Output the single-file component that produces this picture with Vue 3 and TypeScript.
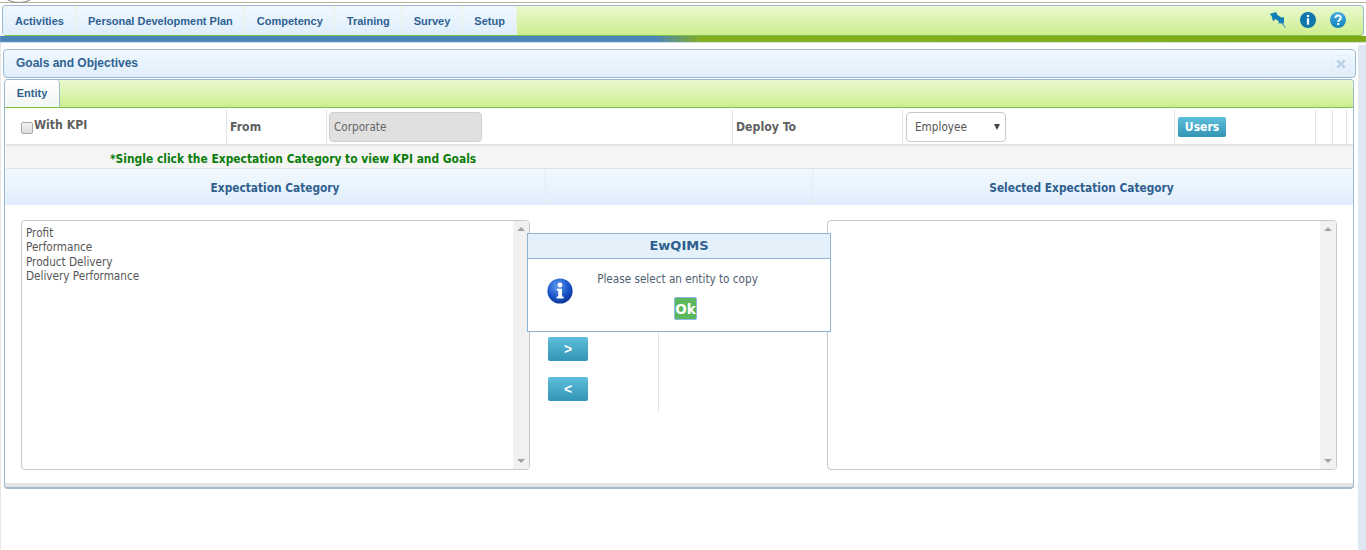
<script setup lang="ts">
const tabs: string[] = ['Activities', 'Personal Development Plan', 'Competency', 'Training', 'Survey', 'Setup']
const items: string[] = ['Profit', 'Performance', 'Product Delivery', 'Delivery Performance']
</script>

<template>
  <div class="page">
    <div class="strip"><span class="logo"></span></div>
    <nav class="nav">
      <div class="tabs">
        <a v-for="t in tabs" :key="t" class="tab">{{ t }}</a>
      </div>
      <div class="tools">
        <svg width="17" height="16" viewBox="0 0 17 16">
          <path d="M0.8 2 L7 0 L8.5 3 L12.8 5.8 L15 5 L15 11.6 L9.2 11.2 L10 9.6 L6.6 7 L4 9.2 L2.6 4 Z" fill="#0f7fb5" />
          <path d="M11.5 9.5 L16.5 15.5" stroke="#3f8fb8" stroke-width="1.1" fill="none" />
        </svg>
        <svg width="16" height="16" viewBox="0 0 16 16">
          <circle cx="8" cy="8" r="8" fill="#0f76ac" />
          <circle cx="8" cy="4" r="1.3" fill="#fff" />
          <rect x="6.9" y="6.3" width="2.2" height="6.4" fill="#fff" />
        </svg>
        <svg width="16" height="16" viewBox="0 0 16 16">
          <defs>
            <linearGradient id="qg" x1="0" y1="0" x2="0" y2="1">
              <stop offset="0" stop-color="#45aee0" />
              <stop offset="1" stop-color="#1380bd" />
            </linearGradient>
          </defs>
          <circle cx="8" cy="8" r="8" fill="url(#qg)" />
          <path d="M5.4 6 C5.5 2.7 10.8 2.6 10.8 5.8 C10.8 7.8 8.3 7.8 8.3 10" fill="none" stroke="#fff" stroke-width="1.9" />
          <rect x="7.2" y="11" width="2.1" height="2.1" fill="#fff" />
        </svg>
      </div>
    </nav>
    <div class="rule"></div>

    <div class="body">
      <main class="panel">
        <header class="head">
          <span class="headText">Goals and Objectives</span>
          <span class="close">
            <svg width="10" height="10" viewBox="0 0 10 10">
              <path d="M1.2 1.2 L8.8 8.8 M8.8 1.2 L1.2 8.8" stroke="#bcd3e8" stroke-width="2.8" fill="none" />
            </svg>
          </span>
        </header>
        <div class="card">
          <div class="tabbar"><span class="active">Entity</span></div>
          <div class="row">
            <div class="cell c1"><input type="checkbox" class="check" /><b class="kpi">With KPI</b></div>
            <div class="cell c2"><b>From</b></div>
            <div class="cell c3"><div class="readonly">Corporate</div></div>
            <div class="cell c4"><b>Deploy To</b></div>
            <div class="cell c5"><div class="select"><span>Employee</span><i></i></div></div>
            <div class="cell c6"><button class="users">Users</button></div>
            <div class="cell c7"></div>
            <div class="cell c8"></div>
          </div>
          <div class="note">*Single click the Expectation Category to view KPI and Goals</div>
          <div class="cols">
            <div class="colA">Expectation Category</div>
            <div class="colB"></div>
            <div class="colC">Selected Expectation Category</div>
          </div>
          <div class="lists">
            <div class="list left">
              <div class="opts"><div v-for="i in items" :key="i">{{ i }}</div></div>
              <div class="bar"><i class="up"></i><i class="down"></i></div>
            </div>
            <div class="mid">
              <div class="moves">
                <button class="move">&gt;</button>
                <button class="move">&lt;</button>
              </div>
              <div class="divider"></div>
            </div>
            <div class="list right">
              <div class="opts"></div>
              <div class="bar"><i class="up"></i><i class="down"></i></div>
            </div>
          </div>
        </div>
      </main>
      <div class="scroll"></div>
    </div>

    <div class="dialog">
      <div class="dtitle">EwQIMS</div>
      <div class="dbody">
        <svg class="dicon" width="26" height="26" viewBox="0 0 26 26">
          <defs>
            <radialGradient id="ig" cx="0.4" cy="0.3" r="0.8">
              <stop offset="0" stop-color="#5f9cf0" />
              <stop offset="0.6" stop-color="#1650c4" />
              <stop offset="1" stop-color="#0a2a80" />
            </radialGradient>
          </defs>
          <circle cx="13" cy="13" r="12.6" fill="url(#ig)" />
          <circle cx="13" cy="7" r="2.4" fill="#fff" />
          <path d="M9.8 10.8 H15 V18.6 H16.6 V20.6 H9.6 V18.6 H11.2 V12.8 H9.8 Z" fill="#fff" />
        </svg>
        <div class="dmain">
          <div class="dmsg">Please select an entity to copy</div>
          <button class="ok">Ok</button>
        </div>
      </div>
    </div>
  </div>
</template>

<style>
html, body { margin: 0; padding: 0; background: #fff; overflow: hidden; }
</style>

<style scoped>
.page {
  position: relative;
  width: 1366px;
  height: 550px;
  overflow: hidden;
  background: #fff;
  font-family: "DejaVu Sans", Tahoma, sans-serif;
  font-stretch: condensed;
  font-size: 11.65px;
  color: #5a5a5a;
}
.strip {
  position: relative;
  height: 5px;
  box-sizing: border-box;
  background: linear-gradient(#fff 0 2px, #b4b699 2px 3px, #fff 3px);
}
.logo {
  position: absolute;
  left: 4px;
  top: -13px;
  width: 28px;
  height: 14px;
  border-radius: 50%;
  background: #fff;
  border: 1px solid #8b8b8b;
}
.nav {
  display: flex;
  justify-content: space-between;
  align-items: center;
  box-sizing: border-box;
  height: 31px;
  margin: 0 2px;
  border: 1px solid #9db9d2;
  border-bottom-color: #7cc24a;
  border-radius: 4px;
  background: linear-gradient(#eaf9cf, #cdee90);
}
.tabs { display: flex; height: 29px; }
.tab {
  display: flex;
  align-items: center;
  padding: 0 12px;
  border-radius: 4px 4px 0 0;
  background: linear-gradient(#f0f8fe, #dfeefb);
  box-shadow: inset -1px 0 0 #eef2e6;
  font-family: "Liberation Sans", Arial, sans-serif;
  font-size: 11px;
  font-weight: 700;
  color: #2e6192;
}
.tools { display: flex; align-items: center; gap: 14px; padding: 0 17px 1px 0; }
.rule {
  height: 7px;
  background: linear-gradient(90deg, #4a84b8 0, #4a84b8 48%, #85ae1c 51.5%, #7fa914 100%);
  box-shadow: inset 0 -1px 1px #d7e6ee;
}
.body { display: flex; height: 507px; }
.panel { flex: 1; min-width: 0; padding: 6px 0 0 2px; border-left: 1px solid #e6e6e6; }
.scroll { width: 8px; margin-top: 2px; background: #dfe8f1; }
.head {
  display: flex;
  justify-content: space-between;
  align-items: center;
  box-sizing: border-box;
  height: 29px;
  margin-right: 2px;
  padding: 0 5px 0 12px;
  border: 1px solid #9db9d2;
  border-radius: 4px;
  background: linear-gradient(#f2f9fe, #dfeefb);
  font-family: "Liberation Sans", Arial, sans-serif;
  font-size: 12px;
  font-weight: 700;
  color: #2e6192;
}
.headText { position: relative; top: -1px; }
.close {
  display: flex;
  align-items: center;
  justify-content: center;
  box-sizing: border-box;
  width: 18px;
  height: 18px;
  border: 1px solid #e3edf6;
  border-radius: 3px;
}
.card {
  box-sizing: border-box;
  height: 410px;
  margin: 1px 4px 0 1px;
  border: 1px solid #9db9d2;
  border-radius: 4px;
  border-bottom-width: 2px;
  box-shadow: inset 0 -4px 0 #e3e3e3;
  overflow: hidden;
}
.tabbar {
  height: 28px;
  box-sizing: border-box;
  border-bottom: 1px solid #80c04a;
  background: linear-gradient(#eaf9cf, #cdee90);
}
.active {
  display: inline-flex;
  align-items: center;
  justify-content: center;
  box-sizing: border-box;
  width: 55px;
  height: 27px;
  padding-bottom: 1px;
  border-right: 1px solid #9db9d2;
  background: linear-gradient(#fff, #f1f6f1);
  border-radius: 4px 4px 0 0;
  font-family: "Liberation Sans", Arial, sans-serif;
  font-size: 11px;
  font-weight: 700;
  color: #2e6192;
}
.row {
  display: flex;
  height: 38px;
  margin-left: 1px;
  padding-top: 2px;
  box-sizing: border-box;
  border-bottom: 2px solid #e3e3e3;
}
.cell {
  display: flex;
  align-items: center;
  box-sizing: border-box;
  border-right: 1px solid #e3e3e3;
}
.cell b { font-size: 12.2px; color: #5f5f5f; }
.c1 { width: 221px; padding-left: 15px; }
.kpi { position: relative; top: -2px; }
.c2 { width: 100px; padding-left: 3px; }
.c3 { width: 406px; padding-left: 2px; }
.c4 { width: 170px; padding-left: 3px; }
.c5 { width: 272px; padding-left: 3px; }
.c6 { width: 141px; padding-left: 3px; }
.c7 { width: 17px; }
.c8 { width: 14px; }
.check {
  appearance: none;
  position: relative;
  top: 1px;
  width: 12px;
  height: 12px;
  margin: 0 1px 0 0;
  border: 1px solid #a8a8a8;
  border-radius: 2px;
  background: linear-gradient(#f2f2f2, #dcdcdc);
}
.readonly {
  box-sizing: border-box;
  width: 153px;
  height: 30px;
  line-height: 29px;
  padding-left: 4px;
  border: 1px solid #cfcfcf;
  border-radius: 4px;
  background: #e0e0e0;
  color: #666;
}
.select {
  display: flex;
  align-items: center;
  justify-content: space-between;
  box-sizing: border-box;
  width: 100px;
  height: 30px;
  padding: 0 5px 0 8px;
  border: 1px solid #c8c8c8;
  border-radius: 4px;
  background: #fff;
  color: #555;
}
.select i {
  border-left: 3px solid transparent;
  border-right: 3px solid transparent;
  border-top: 6px solid #444;
}
.users {
  width: 48px;
  height: 20px;
  padding: 0;
  border: 0;
  border-radius: 2px;
  background: linear-gradient(#5ebfdc, #3294b4);
  font-family: inherit;
  font-stretch: condensed;
  font-size: 12px;
  font-weight: 700;
  color: #fff;
}
.note {
  box-sizing: border-box;
  height: 23px;
  line-height: 23px;
  margin-left: 1px;
  padding: 2px 0 0 104px;
  overflow: hidden;
  background: #f5f5f5;
  border-bottom: 1px solid #dfe3e6;
  font-size: 11.9px;
  font-weight: 700;
  color: #0a7d0a;
}
.cols {
  display: flex;
  height: 36px;
  background: linear-gradient(#f2f9fe, #dfeefb);
  font-size: 11.8px;
  font-weight: 700;
  color: #2f5f8f;
}
.colA, .colC { display: flex; align-items: center; justify-content: center; padding-top: 1px; box-sizing: border-box; }
.colA { width: 541px; border-right: 1px solid #e2ecf5; }
.colB { width: 267px; border-right: 1px solid #e2ecf5; box-sizing: border-box; }
.colC { flex: 1; padding-right: 3px; }
.lists { display: flex; padding: 15px 16px 0 16px; }
.list {
  display: flex;
  box-sizing: border-box;
  height: 250px;
  border: 1px solid #c8c8c8;
  border-radius: 4px;
  overflow: hidden;
}
.left { width: 509px; }
.right { width: 510px; }
.opts { flex: 1; padding: 5px 4px; line-height: 14.3px; color: #555; }
.bar {
  position: relative;
  width: 16px;
  background: #f1f1f1;
}
.up, .down {
  position: absolute;
  left: 4px;
  border-left: 4px solid transparent;
  border-right: 4px solid transparent;
}
.up { top: 6px; border-bottom: 4px solid #a3a3a3; }
.down { bottom: 6px; border-top: 4px solid #a3a3a3; }
.mid { display: flex; width: 297px; height: 192px; }
.moves {
  display: flex;
  flex-direction: column;
  gap: 16px;
  box-sizing: border-box;
  width: 128px;
  padding: 117px 0 0 18px;
}
.move {
  width: 40px;
  height: 24px;
  padding: 0;
  border: 0;
  border-radius: 2px;
  background: linear-gradient(#5ebfdc, #3294b4);
  font-family: "Liberation Sans", Arial, sans-serif;
  font-size: 14px;
  font-weight: 700;
  color: #fff;
}
.divider { width: 1px; margin-top: 30px; background: #e3e3e3; }
.dialog {
  position: absolute;
  left: 527px;
  top: 233px;
  box-sizing: border-box;
  width: 304px;
  height: 99px;
  border: 1px solid #90b5d4;
  background: #fff;
}
.dtitle {
  box-sizing: border-box;
  height: 25px;
  line-height: 24px;
  text-align: center;
  border-bottom: 1px solid #90b5d4;
  background: #e4f1fb;
  font-stretch: normal;
  font-size: 13px;
  font-weight: 700;
  color: #2f5f8f;
}
.dbody { display: flex; height: 72px; }
.dicon { margin: 19px 0 0 19px; flex: none; }
.dmain {
  flex: 1;
  display: flex;
  flex-direction: column;
  align-items: center;
  padding: 12px 48px 0 0;
}
.dmsg { line-height: 16px; color: #4f6070; }
.ok {
  width: 23px;
  height: 23px;
  margin: 10px 0 0 16px;
  padding: 0;
  border: 1px solid #8db6e6;
  border-radius: 2px;
  background: #5cb85c;
  font-family: inherit;
  font-size: 13.5px;
  font-weight: 700;
  color: #fff;
}
</style>
